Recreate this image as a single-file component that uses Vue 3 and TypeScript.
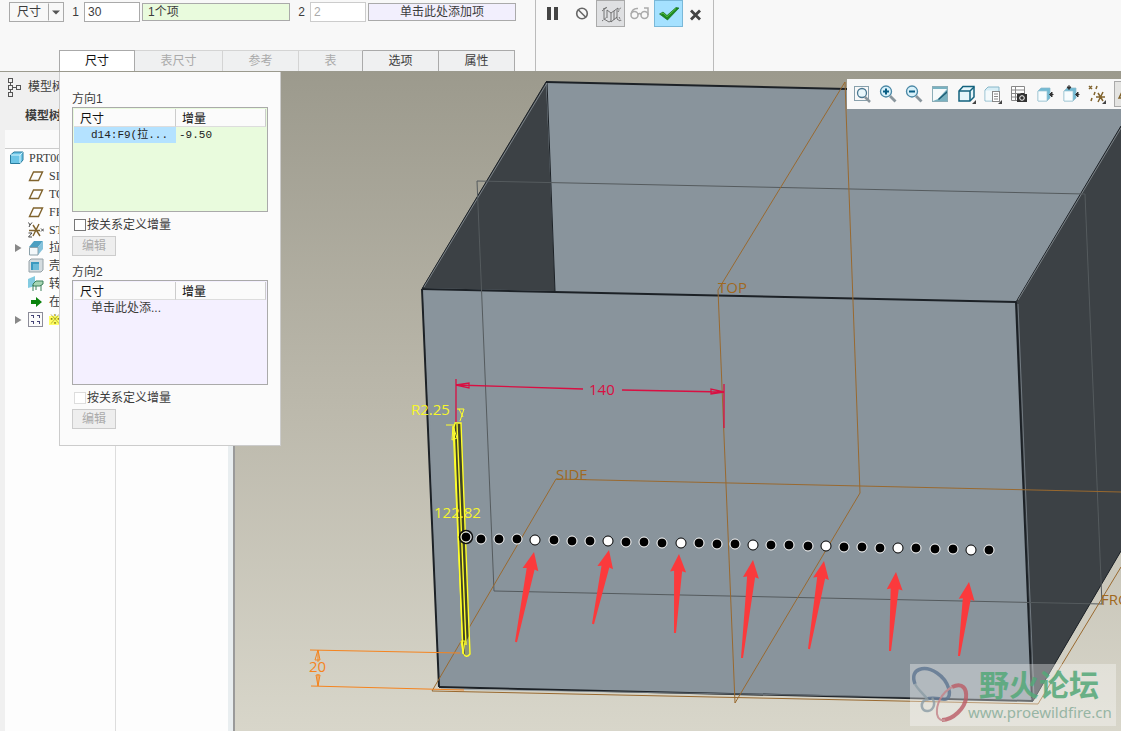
<script setup lang="ts">
import { ref } from 'vue'

interface Tab { label: string; width: number; disabled: boolean }
interface Direction { id: number; title: string; tone: string; cell: string; value: string; disabled: boolean }
interface TreeNode { label: string; icon: string; expandable?: boolean }
interface Arrow { tip: [number, number]; tail: [number, number] }

const tabs: Tab[] = [
  { label: '尺寸', width: 76, disabled: false },
  { label: '表尺寸', width: 88, disabled: true },
  { label: '参考', width: 76, disabled: true },
  { label: '表', width: 64, disabled: true },
  { label: '选项', width: 76, disabled: false },
  { label: '属性', width: 76, disabled: false },
]
const activeTab = ref('尺寸')

const first = ref('30')
const firstItems = ref('1个项')
const second = ref('2')
const secondItems = ref('单击此处添加项')

const directions: Direction[] = [
  { id: 1, title: '方向1', tone: 'green', cell: 'd14:F9(拉...', value: '-9.50', disabled: false },
  { id: 2, title: '方向2', tone: 'violet', cell: '单击此处添...', value: '', disabled: true },
]

const nodes: TreeNode[] = [
  { label: 'SIDE', icon: 'plane' },
  { label: 'TOP', icon: 'plane' },
  { label: 'FRONT', icon: 'plane' },
  { label: 'STD_CSYS', icon: 'csys' },
  { label: '拉伸', icon: 'extrude', expandable: true },
  { label: '壳', icon: 'shell' },
  { label: '转', icon: 'turn' },
  { label: '在此插入', icon: 'insert' },
  { label: '※', icon: 'pattern', expandable: true },
]

const viewTools = ['fit', 'in', 'out', 'repaint', 'style', 'saved', 'manager', 'persp', 'spin', 'datum']

const dots = Array.from({ length: 29 }, (_, i) => ({
  x: Math.round(481 + i * 18.14),
  y: Math.round(538.5 + i * 0.41),
  hollow: i % 4 === 3,
}))

const arrows: Arrow[] = [
  { tip: [534, 552], tail: [516, 642] },
  { tip: [609, 550], tail: [593, 624] },
  { tip: [679, 554], tail: [675, 633] },
  { tip: [753, 560], tail: [742, 658] },
  { tip: [824, 561], tail: [809, 649] },
  { tip: [896, 572], tail: [890, 651] },
  { tip: [969, 582], tail: [959, 656] },
]

function arrowPoints(a: Arrow): string {
  const dx = a.tail[0] - a.tip[0]
  const dy = a.tail[1] - a.tip[1]
  const len = Math.hypot(dx, dy)
  const at = (along: number, side: number) =>
    `${(a.tip[0] + (dx * along - dy * side) / len).toFixed(1)},${(a.tip[1] + (dy * along + dx * side) / len).toFixed(1)}`
  return [at(0, 0), at(18, 8), at(17, 4), at(len, 1), at(len, -1), at(17, -4), at(18, -8)].join(' ')
}
</script>

<template>
  <div class="app">
    <header class="ribbon">
      <div class="dash">
        <div class="fields">
          <div class="picker">
            <select aria-label="类型"><option>尺寸</option></select>
            <svg viewBox="0 0 15 17" aria-hidden="true"><path d="M0.5 0V17" stroke="#aaa" /><path d="M4 7H12L8 11Z" fill="#555" /></svg>
          </div>
          <label class="num" for="f1">1</label>
          <input id="f1" v-model="first" class="short" />
          <input v-model="firstItems" class="items green" aria-label="第一方向项" />
          <label class="num" for="f2">2</label>
          <input id="f2" v-model="second" class="short off" disabled />
          <input v-model="secondItems" class="items violet" aria-label="第二方向项" />
        </div>
        <nav class="tabs">
          <button
            v-for="t in tabs" :key="t.label" type="button" class="tab"
            :class="{ active: activeTab === t.label }" :style="{ width: t.width + 'px' }"
            :disabled="t.disabled" @click="activeTab = t.label"
          >{{ t.label }}</button>
        </nav>
      </div>
      <div class="actions">
        <button type="button" aria-label="暂停"><svg viewBox="0 0 24 24"><path d="M6 5H10V18H6ZM13 5H17V18H13Z" fill="#444" /></svg></button>
        <button type="button" aria-label="无预览"><svg viewBox="0 0 24 24"><g fill="none" stroke="#666" stroke-width="1.6"><circle cx="12" cy="11.500" r="5.300" /><path d="M8 7.500L16 15.500" /></g></svg></button>
        <button type="button" class="pressed" aria-label="未附加预览"><svg viewBox="0 0 24 24"><g fill="none" stroke="#666" stroke-width="0.900"><path d="M4 7L8 5.500M5 7V17L10 20L12 19M8 8L12 11L19 6M12 11V20L18 15M15 9V18M19 6V8M18 8V17L21 19M8 8V16" /><path d="M3 19L8 15M3 9L8 5M19 10L22 5M20 15L22 19" stroke-dasharray="2 1" /></g></svg></button>
        <button type="button" aria-label="附加预览"><svg viewBox="0 0 24 24"><g fill="none" stroke="#aaa" stroke-width="1.500"><circle cx="6.500" cy="13" r="3.500" /><circle cx="16.500" cy="13" r="3.500" /><path d="M3 12C4 8 6 6 10 6.500M10 12.500C11 11 12 11 13 12.500M20 13V6H16" /></g></svg></button>
        <button type="button" class="ok" aria-label="确定"><svg viewBox="0 0 24 24"><path d="M2.500 12L6 10L10 13.500L19 5.500L22 6L10.500 18Z" fill="#1c8a20" stroke="#13661a" stroke-width="0.600" /><path d="M4 12L6 11L10 14.700L19 6.500" fill="none" stroke="#56bd42" /></svg></button>
        <button type="button" aria-label="取消"><svg viewBox="0 0 24 24"><path d="M5 8.500L14 17.500M14 8.500L5 17.500" fill="none" stroke="#444" stroke-width="2.800" /></svg></button>
      </div>
    </header>

    <main class="work">
      <aside class="side">
        <div class="side-tab">
          <svg viewBox="0 0 16 20"><g fill="none" stroke="#555"><rect x="3.500" y="1.500" width="4" height="4" /><rect x="3.500" y="8.500" width="4" height="4" /><rect x="3.500" y="15.500" width="4" height="4" /><rect x="11.500" y="8.500" width="4" height="4" /><path d="M5.500 5.500V8.500M5.500 12.500V15.500M7.500 10.500H11.500" /></g></svg>
          <span>模型树</span>
        </div>
        <h2>模型树</h2>
        <div class="tree">
          <div class="tree-head"></div>
          <ul>
            <li class="root">
              <svg viewBox="0 0 16 16"><path d="M2.500 5L6 2H15V10L12 13.500H2.500Z" fill="#6cc5e6" stroke="#287b9d" /><path d="M3 5H12V13M12 5L14.500 2.500" fill="none" stroke="#d8f6ff" /></svg>
              <span>PRT0001</span>
            </li>
            <li v-for="n in nodes" :key="n.label">
              <i class="twist"><svg v-if="n.expandable" viewBox="0 0 8 10"><path d="M1 1L7.500 5L1 9Z" fill="#888" /></svg></i>
              <svg viewBox="0 0 16 16">
                <path v-if="n.icon === 'plane'" d="M1.500 12.500L5.500 4H14.500L10.500 12.500Z" fill="none" stroke="#80632d" stroke-width="1.400" />
                <g v-else-if="n.icon === 'csys'" fill="none" stroke="#80632d" stroke-width="1.400"><path d="M1 8.500H12M5 14L11 2M5 3L12 14" /><path d="M0.500 0.500L2 3L4 0.500M2 3L1 5M0.500 11H4L0.500 15H4M13 6.500L16 9.500M16 6.500L13 9.500" stroke="#444" stroke-width="1" /></g>
                <g v-else-if="n.icon === 'extrude'"><path d="M6 1H15L10 7H1Z" fill="#4b9fc1" /><path d="M15 1V9L10 15V7Z" fill="#85c2dc" /><path d="M1.500 7.500H10V15H1.500Z" fill="#f3f8fa" stroke="#8ca1aa" /></g>
                <g v-else-if="n.icon === 'shell'"><path d="M1 3L3 1H15V12L13 14H1Z" fill="#d4dce0" stroke="#96a2a8" /><rect x="3" y="4" width="8" height="8" fill="#3b99bf" /><path d="M5 6H11V12H5Z" fill="#6dbbd8" /></g>
                <g v-else-if="n.icon === 'turn'"><path d="M0 3L7 0V10L0 12Z" fill="#83cbe1" /><path d="M5 8L8 5H15V8L12 10H5ZM5 9V15M8 10V14M13 9V15" fill="#a7d5b3" stroke="#3c805a" /></g>
                <path v-else-if="n.icon === 'insert'" d="M3 6H8V3L14 8L8 13V10H3Z" fill="#0b830d" />
                <g v-else><rect x="0.500" y="0.500" width="14" height="14" fill="#fafafa" stroke="#8c8c99" /><path d="M3 3H6V6H5V4H3ZM9 3H12V6H11V4H9ZM3 9H6V12H5V10H3ZM9 9H12V12H11V10H9Z" fill="#444477" /></g>
              </svg>
              <span :class="{ star: n.label === '※' }">{{ n.label }}</span>
            </li>
          </ul>
        </div>
      </aside>

      <section class="viewport">
        <svg class="scene" viewBox="235 72 886 659" preserveAspectRatio="xMidYMid slice" role="img" aria-label="模型">
          <polygon points="546,82 1121,95 1121,551 1033,701 439,687 422,289" fill="#89949c" />
          <polygon points="546,82 555,291 422,288" fill="#3c4145" />
          <polygon points="1016,302 1121,126 1121,551 1033,701" fill="#3c4145" />

          <g class="edge">
            <path d="M546 82L847 89" stroke-width="2" />
            <path d="M546 82L422 289M547 82L555 291M1016 302L1121 126M1033 701L1121 551" />
            <path d="M422 289L1016 302M439 687L1033 701" stroke-width="2" />
            <path d="M422 289L439 687M1016 302L1032 701" stroke-width="2" />
          </g>
          <path d="M424 292L441 686M1018 304L1034 698M441 689L1032 699" fill="none" stroke="#89949c" stroke-width="0.700" />
          <path d="M424 287L547 83M1018 300L1121 128" fill="none" stroke="#a8b0b5" stroke-width="0.600" />

          <path d="M477 181L1085 194L1102 604L494 591Z" fill="none" stroke="#555b5e" />
          <g fill="none" stroke="#99692f">
            <path d="M718 290L845 82L860 493L735 703Z" />
            <path d="M1121 492L556 479L432 691L1038 704L1121 567" />
          </g>
          <g class="note" fill="#a0691f">
            <text x="718" y="293">TOP</text>
            <text x="556" y="480">SIDE</text>
            <text x="1101" y="605">FRO</text>
          </g>

          <g fill="none" stroke="#f5841f">
            <path d="M310 650L460 653M311 686L464 690M318 650V662M318 674V686M315 660L318 650L320 660ZM316 675H320L318 686Z" />
          </g>
          <text class="note" x="309" y="672" fill="#f5841f">20</text>

          <g fill="none" stroke="#d90f42" stroke-width="1.300">
            <path d="M456 379V422M724 384V428M456 385L583 389M622 390L724 392M456 385L469 383V388ZM724 392L711 389V394Z" />
          </g>
          <text class="note" x="589" y="395" fill="#d90f42">140</text>

          <path d="M454 423H461L470 650Q470 658 463 655Z" fill="#414426" />
          <path d="M464 646L470 634L471 655L465 657Z" fill="#8c9478" />
          <g fill="none" stroke="#ffff2b" stroke-width="1.400">
            <path d="M454 427L455 423H461L470 654Q466 659 463 653ZM457 424L466 645" />
            <path d="M453 427L463 654M457 409H464L460 421M459 409L463 417M446 425H455M453 426L452 440L457 438ZM461 641H465L463 653Z" stroke-width="1" />
          </g>
          <g class="note" fill="#f6f62c">
            <text x="411" y="415">R2.25</text>
            <text x="434" y="518">122.82</text>
          </g>

          <circle cx="466" cy="537" r="6.500" fill="none" stroke="#111" stroke-width="1.500" />
          <circle cx="466" cy="537" r="5" fill="#000" stroke="#fff" />
          <circle v-for="d in dots" :key="d.x" :cx="d.x" :cy="d.y" r="5" :fill="d.hollow ? '#fff' : '#000'" :stroke="d.hollow ? '#000' : '#fff'" />
          <polygon v-for="a in arrows" :key="a.tip[0]" :points="arrowPoints(a)" fill="#fb3a3c" />

          <rect x="910" y="664" width="206" height="62" fill="#fff" opacity="0.350" />
          <g fill="none" opacity="0.800">
            <path d="M915 684C909 668 925 665 937 673C949 681 953 697 946 699C941 700 936 697 926 699" stroke="#5e7591" stroke-width="3.500" />
            <path d="M915 684C918 690 924 694 927 699C919 702 921 712 928 711C934 710 936 703 932 698" stroke="#8c9da6" stroke-width="2.500" />
            <path d="M952 687C963 682 967 689 966 698C965 708 953 720 942 720" stroke="#bb5c66" stroke-width="4" />
            <path d="M952 687C941 693 936 705 937 714C938 719 941 721 945 720" stroke="#c48389" stroke-width="2" />
          </g>
          <text class="brand" x="979" y="696">野火论坛</text>
          <text class="url" x="968" y="718">www.proewildfire.cn</text>
        </svg>

        <div class="view-tools">
          <button v-for="v in viewTools" :key="v" type="button" :aria-label="v">
            <svg viewBox="0 0 20 20">
              <g v-if="v === 'fit'" fill="none"><rect x="2.500" y="2.500" width="14" height="14" stroke="#88a0ac" /><circle cx="10" cy="9" r="4.500" fill="#e8f7fc" stroke="#4b7891" stroke-width="1.300" /><path d="M13 13L18 18" stroke="#8a969d" stroke-width="2.500" /></g>
              <g v-else-if="v === 'in' || v === 'out'" fill="none"><circle cx="8" cy="7.500" r="5.500" fill="#d8f1fa" stroke="#4a87a5" stroke-width="1.300" /><path d="M12 12L17.500 17.500" stroke="#8a969d" stroke-width="2.800" /><path :d="v === 'in' ? 'M5 7.500H11M8 4.500V10.500' : 'M5 7.500H11'" stroke="#075d84" stroke-width="2" /></g>
              <g v-else-if="v === 'repaint'"><rect x="2.500" y="2.500" width="15" height="15" fill="#79b2c1" stroke="#8caeb8" /><path d="M3 5H17L8 15L3 17Z" fill="#f5fafb" /><path d="M8 15L17 7V9L9 16Z" fill="#1c5e76" /></g>
              <g v-else-if="v === 'style'" fill="#e5f6fb" stroke="#13627d" stroke-width="1.500"><path d="M3 7L7 2.500H18V13L14 17H3Z" /><path d="M3 7H14V17M14 7L18 3" fill="none" /></g>
              <g v-else-if="v === 'saved'"><path d="M3 6L6 3H17V13L14 17H3Z" fill="#d6edf5" stroke="#88b8ca" /><path d="M3.500 6.500H13V16.500H3.500Z" fill="#f4fafc" /><rect x="10.500" y="7.500" width="7" height="10" fill="#fff" stroke="#888" /><path d="M12 10H16M12 12.500H16M12 15H16" stroke="#888" /></g>
              <g v-else-if="v === 'manager'"><path d="M3.500 2.500H16.500V16.500H3.500ZM3.500 6H16.500M3.500 9.500H16.500M3.500 13H16.500M7.500 2.500V16.500" fill="#fff" stroke="#888" /><path d="M9 10H12L13 9H16L17 10H19V18H9Z" fill="#333" /><circle cx="14" cy="14" r="2.300" fill="#333" stroke="#fff" /></g>
              <g v-else-if="v === 'persp' || v === 'spin'"><path d="M4 7L7 4H16V14L13 17H4Z" fill="#73bbd4" stroke="#89b8c8" stroke-width="0.700" /><path d="M4 7H13V17H4Z" fill="#f7fcfe" stroke="#9cc6d4" stroke-width="0.700" /><path d="M19.500 10.500H16M18 8L15.500 10.500L18 13Z" fill="#333" stroke="#333" /><path v-if="v === 'spin'" d="M9 1V4M7 3L9 5.500L11 3Z" fill="#333" stroke="#333" /></g>
              <g v-else fill="none" stroke="#80632d" stroke-width="1.500"><path d="M3 2L6 5M6 2L3 5M11 2L10 5M9 8L8 11M6 14L5 17M12 9L17 17M17 8L12 18M10 13H19" /></g>
              <path v-if="['style', 'saved', 'datum'].includes(v)" d="M20 16V20H16Z" fill="#444" />
            </svg>
          </button>
          <button type="button" class="plane-toggle" aria-label="基准显示"><svg viewBox="0 0 20 20"><path d="M2 14L6 6H16L12 14Z" fill="none" stroke="#80632d" stroke-width="1.500" /></svg></button>
        </div>
      </section>

      <section class="sheet">
        <div v-for="d in directions" :key="d.id" class="direction">
          <h3>{{ d.title }}</h3>
          <div class="grid" :class="d.tone">
            <table>
              <thead><tr><th scope="col">尺寸</th><th scope="col">增量</th></tr></thead>
              <tbody><tr><td>{{ d.cell }}</td><td>{{ d.value }}</td></tr></tbody>
            </table>
          </div>
          <label class="check"><input type="checkbox" :disabled="d.disabled" />按关系定义增量</label>
          <button type="button" class="edit" disabled>编辑</button>
        </div>
      </section>
    </main>
  </div>
</template>

<style>
body { margin: 0; }
</style>

<style scoped>
* { box-sizing: border-box; }
.app {
  display: flex; flex-direction: column; height: 100vh; overflow: hidden;
  font: 12px/18px "Liberation Sans", "Noto Sans CJK SC", sans-serif; color: #3c3c3c; background: #f0f0f0;
}
button, input, select { font: inherit; color: inherit; margin: 0; }
button { padding: 0; border: 0; background: none; }
svg { display: block; }

.ribbon { display: flex; height: 72px; flex: none; background: #f8f8f8; border-bottom: 1px solid #9b9a8e; }
.dash { width: 536px; display: flex; flex-direction: column; justify-content: space-between; border-right: 1px solid #bbb; }
.fields { display: flex; align-items: center; padding: 2px 0 0 9px; }
.picker { position: relative; width: 55px; height: 20px; }
.picker select { appearance: none; width: 100%; height: 100%; padding: 0 7px; border: 1px solid #aaa; border-radius: 0; background: #f8f8f8; }
.picker svg { position: absolute; right: 1px; top: 1px; width: 15px; height: 18px; pointer-events: none; }
.num { width: 20px; padding-right: 5px; text-align: right; }
.fields input { height: 20px; border: 1px solid #aaa; padding: 0 3px; background: #fff; }
.fields .short { width: 56px; }
.fields .short.off { color: #aaa; border-color: #ccc; margin-right: 2px; }
.fields .items { width: 148px; height: 18px; padding: 0 5px; }
.short + .items.green { margin-left: 2px; }
.fields .green { background: #e9fbdd; }
.fields .violet { background: #f2effd; text-align: center; }
.tabs { display: flex; padding-left: 59px; }
.tab { height: 21px; border: 1px solid #aaa; border-width: 1px 1px 0 0; background: #eff0f1; }
.tab:disabled { color: #aaa; border-color: #d4d4d4; }
.tab.active { background: #fff; color: #111; border-left-width: 1px; }
.tab:nth-child(4) { border-right-color: #aaa; }

.actions { display: flex; align-items: flex-start; padding-left: 2px; width: 178px; border-right: 1px solid #bbb; }
.actions button { width: 29px; height: 27px; padding: 1px 2px; border: 1px solid transparent; }
.actions button svg { width: 24px; height: 24px; }
.actions .pressed { background: #dfe0e2; border-color: #aaa; }
.actions .ok { background: #a5e1ff; border-color: #7ab8d8; }

.work { position: relative; flex: 1; min-height: 0; display: flex; }
.side { width: 235px; flex: none; display: flex; flex-direction: column; border-right: 2px solid #9a9a9a; }
.side-tab { display: flex; align-items: center; gap: 7px; height: 30px; padding-left: 5px; }
.side-tab svg { width: 16px; height: 20px; }
.side h2 { margin: 0; height: 28px; padding: 5px 0 0 25px; font-size: 12px; line-height: 18px; }
.tree { flex: 1; margin-left: 5px; border-right: 5px solid #e9eef0; background: linear-gradient(90deg, #fdfdfd 110px, #ddd 110px, #ddd 111px, #fdfdfd 111px); }
.tree-head { height: 19px; border-bottom: 1px solid #ccc; background: #fafafa; }
.tree ul { margin: 0; padding: 0; list-style: none; font-family: "Liberation Serif", "Noto Sans CJK SC", serif; }
.tree li { display: flex; align-items: center; gap: 5px; height: 18px; padding-left: 9px; white-space: nowrap; }
.tree li > svg { width: 16px; height: 16px; flex: none; }
.tree .root { padding-left: 3px; }
.twist { width: 9px; }
.twist svg { width: 8px; height: 10px; }
.star { color: #8a8a00; background: #ffff6b; line-height: 9px; }

.viewport { position: relative; flex: 1; min-width: 0; overflow: hidden; background: linear-gradient(#9c9a8d, #bbb8ab 50%, #d8d6ca); }
.scene { width: 100%; height: 100%; }
.edge { fill: none; stroke: #1c2126; }
.note { font-family: "Open Sans", sans-serif; font-size: 15px; }
.brand { font-family: "Noto Sans CJK SC", sans-serif; font-size: 30px; font-weight: 700; fill: #54a878; opacity: 0.85; }
.url { font-family: "Noto Sans", sans-serif; font-size: 15px; fill: #97b5a4; }
.view-tools { position: absolute; right: 0; top: 7px; width: 274px; height: 30px; padding: 2px; display: flex; background: #f8f8f8; overflow: hidden; }
.view-tools button { width: 26px; height: 26px; padding: 3px; flex: none; }
.view-tools svg { width: 20px; height: 20px; }
.view-tools .plane-toggle { margin-left: 5px; padding: 2px; border: 1px solid #aaa; background: #e4e4e2; }

.sheet { position: absolute; left: 59px; top: 0; width: 222px; height: 374px; padding: 18px 12px; background: #fbfbfb; border: 1px solid #ccc; border-top: 0; }
.direction { height: 173px; }
.direction h3 { margin: 0; height: 17px; font-size: 12px; font-weight: 400; line-height: 18px; }
.grid { width: 196px; height: 105px; padding: 1px; border: 1px solid #aaa; background: #fff; }
.green.grid { background: #e9fbdd; }
.violet.grid { background: #f4f0ff; }
table { width: 100%; table-layout: fixed; border-collapse: separate; border-spacing: 0; background: inherit; }
th, td { padding: 0; text-align: left; font-weight: 400; white-space: nowrap; }
th { height: 18px; padding: 3px 0 0 6px; line-height: 14px; color: #111; background: #fbfbfb; border-right: 1px solid #ccc; border-bottom: 1px solid #ddd; }
th:first-child { width: 102px; }
td { height: 16px; line-height: 16px; }
td:first-child { padding-left: 17px; }
td:last-child { padding-left: 3px; }
.green td { font-family: "Liberation Mono", "Noto Sans CJK SC", monospace; font-size: 11px; color: #222; }
.green td:first-child { background: #b4e2ff; }
.check { display: flex; align-items: center; gap: 1px; height: 18px; margin-top: 4px; padding-left: 2px; }
.check input { appearance: none; width: 12px; height: 12px; border: 1px solid #777; background: #fff; }
.check input:disabled { border-color: #ddd; }
.edit { display: block; width: 44px; height: 20px; margin-top: 2px; border: 1px solid #ccc; background: #eee; color: #aaa; }
</style>
